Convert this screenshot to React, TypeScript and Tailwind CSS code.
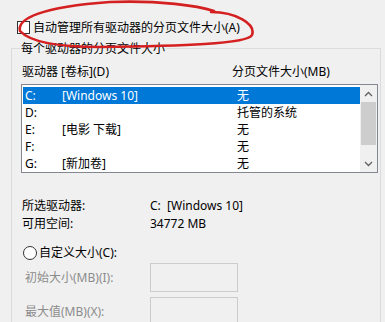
import React from 'react';

const font = "font-['Noto_Sans','Noto_Sans_CJK_SC',sans-serif]";

interface Drive {
  letter: string;
  label: string;
  size: string;
}

const drives: Drive[] = [
  { letter: 'C:', label: '[Windows 10]', size: '无' },
  { letter: 'D:', label: '', size: '托管的系统' },
  { letter: 'E:', label: '[电影 下载]', size: '无' },
  { letter: 'F:', label: '', size: '无' },
  { letter: 'G:', label: '[新加卷]', size: '无' },
];

function ScrollArrow({ up }: { up?: boolean }) {
  return (
    <svg width="9" height="6" viewBox="0 0 9 6" className="block">
      <path
        d={up ? 'M1 5 L4.5 1.5 L8 5' : 'M1 1 L4.5 4.5 L8 1'}
        fill="none"
        stroke="#606060"
        strokeWidth="1.3"
      />
    </svg>
  );
}

export default function App() {
  return (
    <div className={`relative w-[385px] h-[322px] overflow-hidden bg-[#f0f0f0] text-[12px] leading-[17px] text-black ${font}`}>
      {/* checkbox row */}
      <div className="flex items-center pl-[17px] pt-[20px] h-[34px]">
        <div className="w-[13px] h-[13px] border border-[#333] bg-white" />
        <span className="ml-[3px]">自动管理所有驱动器的分页文件大小(A)</span>
      </div>

      {/* group box */}
      <fieldset className="ml-[11px] mr-[4px] mt-[7px] border border-[#dcdcdc] h-[300px] px-0">
        <legend className="ml-[8px] px-px leading-[15px]">每个驱动器的分页文件大小</legend>

        <div className="flex pl-[10px] pt-[8px] h-[28px] leading-[15px]">
          <span className="w-[210px]">驱动器 [卷标](D)</span>
          <span>分页文件大小(MB)</span>
        </div>

        <div className="ml-[9px] mr-[2px] h-[89px] border border-[#828790] bg-white flex">
          <div className="flex-1 pl-px pt-[2px]">
            {drives.map((d, i) => (
              <div
                key={d.letter}
                className={`flex h-[17px] items-center ${i === 0 ? 'bg-[#0078d7] text-white' : ''}`}
              >
                <span className="w-[39px] pl-[2px]">{d.letter}</span>
                <span className="w-[175px]">{d.label}</span>
                <span>{d.size}</span>
              </div>
            ))}
          </div>
          <div className="w-[17px] bg-[#f0f0f0] flex flex-col items-center">
            <div className="h-[17px] flex items-center justify-center">
              <ScrollArrow up />
            </div>
            <div className="w-[15px] h-[43px] bg-[#cdcdcd]" />
            <div className="flex-1" />
            <div className="h-[17px] flex items-center justify-center">
              <ScrollArrow />
            </div>
          </div>
        </div>

        <div className="pl-[10px] pt-[23px]">
          <div className="flex h-[18px] items-center">
            <span className="w-[128px]">所选驱动器:</span>
            <span>C:&nbsp; [Windows 10]</span>
          </div>
          <div className="flex h-[18px] items-center">
            <span className="w-[128px]">可用空间:</span>
            <span>34772 MB</span>
          </div>

          <div className="flex items-center mt-[12px] h-[17px] pl-px">
            <div className="w-[14px] h-[14px] rounded-full border border-[#333] bg-white" />
            <span className="ml-[2px]">自定义大小(C):</span>
          </div>

          <div className="flex items-center mt-[2px] pl-[3px]">
            <span className="w-[125px] text-[#8c8c8c]">初始大小(MB)(I):</span>
            <div className="w-[88px] h-[29px] border border-[#cccccc]" />
          </div>
          <div className="flex items-center mt-[5px] pl-[3px]">
            <span className="w-[125px] text-[#8c8c8c]">最大值(MB)(X):</span>
            <div className="w-[88px] h-[29px] border border-[#cccccc]" />
          </div>
        </div>
      </fieldset>

      {/* hand-drawn red annotation */}
      <svg className="absolute left-0 top-0 pointer-events-none" width="385" height="60" viewBox="0 0 385 60">
        <path
          d="M20 31 C17 19 40 7 110 2 C160 0 198 6 214 11 M211 12 C236 12 256 24 252 35 C248 44 180 46 100 47 C60 47 30 42 20 31"
          fill="none"
          stroke="#d42020"
          strokeWidth="2.6"
          strokeLinecap="round"
        />
      </svg>
    </div>
  );
}
